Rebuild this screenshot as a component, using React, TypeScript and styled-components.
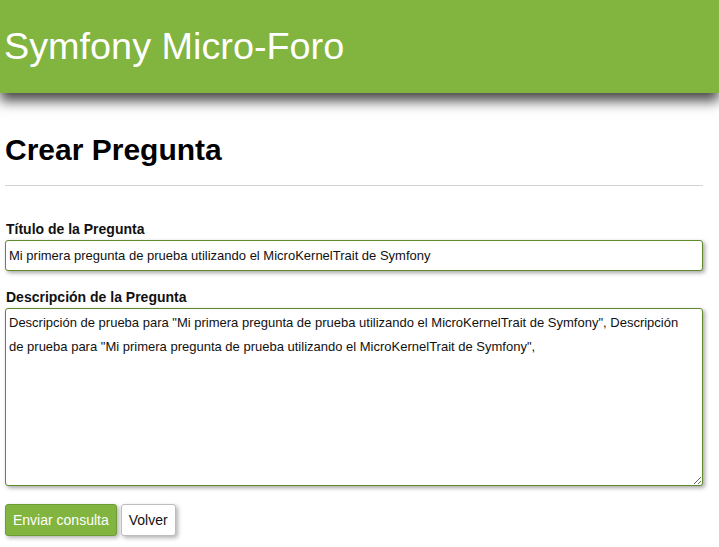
import React, { useEffect, useRef } from "react";
import styled, { createGlobalStyle } from "styled-components";

const Global = createGlobalStyle`
  html, body { margin: 0; padding: 0; background: #fff; }
  body { font-family: "Liberation Sans", Arial, sans-serif; color: #000; }
  * { box-sizing: border-box; }
`;

const Header = styled.header`
  height: 93px;
  background: #82b440;
  display: flex;
  align-items: center;
  padding-left: 4px;
  box-shadow: 0 8px 12px rgba(0, 0, 0, 0.72);
  position: relative;
  z-index: 1;
`;

const Brand = styled.h1`
  margin: 0;
  font-size: 37.8px;
  font-weight: normal;
  color: #fff;
  line-height: normal;
`;

const Main = styled.main`
  padding: 0 16px 20px 5px;
`;

const Title = styled.h2`
  margin: 40px 0 0 0;
  font-size: 30px;
  font-weight: bold;
  line-height: normal;
`;

const Rule = styled.hr`
  margin: 18px 0 0;
  border: 0;
  border-top: 1px solid #d3d3d3;
  height: 0;
`;

const Form = styled.form`
  display: flex;
  flex-direction: column;
`;

const Field = styled.div<{ $top: number }>`
  display: flex;
  flex-direction: column;
  margin-top: ${(p) => p.$top}px;
`;

const Label = styled.label`
  font-size: 14px;
  font-weight: bold;
  line-height: 16px;
  margin: 0 0 3px 1px;
  color: #111;
`;

const TextInput = styled.input`
  height: 31px;
  width: 100%;
  border: 1px solid #5f8a2e;
  border-radius: 3px;
  padding: 0 3px;
  font-family: "Liberation Sans", Arial, sans-serif;
  font-size: 13px;
  color: #111;
  background: #fff;
  box-shadow: 2px 2px 4px rgba(0, 0, 0, 0.35);
  outline: none;
`;

const TextArea = styled.textarea`
  height: 178px;
  width: 100%;
  border: 1px solid #5f8a2e;
  border-radius: 3px;
  padding: 2px 8px 2px 3px;
  font-family: "Liberation Sans", Arial, sans-serif;
  font-size: 13px;
  line-height: 24px;
  color: #111;
  background: #fff;
  box-shadow: 2px 2px 4px rgba(0, 0, 0, 0.35);
  outline: none;
  resize: vertical;
  caret-color: #000;
`;

const Actions = styled.div`
  display: flex;
  gap: 4px;
  margin-top: 18px;
`;

const Button = styled.button<{ $primary?: boolean }>`
  height: 32px;
  padding: 0 7px;
  font-family: "Liberation Sans", Arial, sans-serif;
  font-size: 14px;
  border-radius: 3px;
  cursor: pointer;
  background: ${(p) => (p.$primary ? "#82b440" : "#fff")};
  color: ${(p) => (p.$primary ? "#fff" : "#111")};
  border: 1px solid ${(p) => (p.$primary ? "#6f9c38" : "#bdbdbd")};
  box-shadow: 2px 2px 4px rgba(0, 0, 0, 0.3);
`;

const desc =
  'Descripción de prueba para "Mi primera pregunta de prueba utilizando el MicroKernelTrait de Symfony", Descripción de prueba para "Mi primera pregunta de prueba utilizando el MicroKernelTrait de Symfony",';

export default function App() {
  const ref = useRef<HTMLTextAreaElement>(null);
  useEffect(() => {
    const el = ref.current;
    if (el) {
      el.focus();
      el.setSelectionRange(el.value.length, el.value.length);
    }
  }, []);
  return (
    <>
      <Global />
      <Header>
        <Brand>Symfony Micro-Foro</Brand>
      </Header>
      <Main>
        <Title>Crear Pregunta</Title>
        <Rule />
        <Form onSubmit={(e) => e.preventDefault()}>
          <Field $top={35}>
            <Label htmlFor="titulo">Título de la Pregunta</Label>
            <TextInput
              id="titulo"
              type="text"
              defaultValue="Mi primera pregunta de prueba utilizando el MicroKernelTrait de Symfony"
            />
          </Field>
          <Field $top={18}>
            <Label htmlFor="descripcion">Descripción de la Pregunta</Label>
            <TextArea id="descripcion" ref={ref} defaultValue={desc} />
          </Field>
          <Actions>
            <Button type="submit" $primary>
              Enviar consulta
            </Button>
            <Button type="button">Volver</Button>
          </Actions>
        </Form>
      </Main>
    </>
  );
}
